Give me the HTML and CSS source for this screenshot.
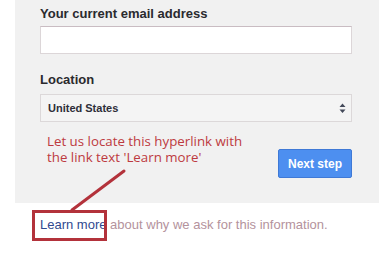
FILE: index.html
```html
<!DOCTYPE html>
<html>
<head>
<meta charset="utf-8">
<link rel="stylesheet" href="styles.css">
</head>
<body>
<div class="page">
  <div class="panel">
    <div class="label">Your current email address</div>
    <div class="input"></div>
    <div class="label label-loc">Location</div>
    <div class="select">
      <span class="select-text">United States</span>
      <svg class="arrows" width="7" height="11" viewBox="0 0 7 11"><path d="M3.5 0.5 L6.5 4 L0.5 4 Z M0.5 6.5 L6.5 6.5 L3.5 10 Z" fill="#444a5a"/></svg>
    </div>
    <div class="row">
      <div class="note">Let us locate this hyperlink with<br>the link text 'Learn more'</div>
      <div class="button">Next step</div>
    </div>
  </div>
  <div class="foot"><a class="link">Learn more</a> about why we ask for this information.</div>
  <svg class="overlay" width="379" height="254" viewBox="0 0 379 254">
    <line x1="124" y1="171" x2="72" y2="210" stroke="#b3323b" stroke-width="3" stroke-linecap="round"/>
    <rect x="33.5" y="211.5" width="72" height="28" fill="none" stroke="#b3323b" stroke-width="3"/>
  </svg>
</div>
</body>
</html>
```
FILE: styles.css
```css
html, body {
  margin: 0;
  padding: 0;
  background: #ffffff;
}
.page {
  position: relative;
  width: 379px;
  height: 254px;
  overflow: hidden;
  font-family: "Liberation Sans", Arial, sans-serif;
}
.panel {
  margin-left: 15px;
  background: #f1f1f1;
  padding: 6px 27px 25px 25px;
  height: 172px;
}
.label {
  font-size: 13px;
  font-weight: bold;
  line-height: 16px;
  color: #2a2a2e;
}
.input {
  margin-top: 4px;
  height: 26px;
  background: #ffffff;
  border: 1px solid #dcd6d8;
  border-top-color: #c9bcc2;
}
.label-loc {
  margin-top: 18px;
}
.select {
  margin-top: 6px;
  height: 26px;
  background: #f4f4f4;
  border: 1px solid #dcd8d9;
  display: flex;
  align-items: center;
  justify-content: space-between;
  padding: 0 5px 0 7px;
  box-sizing: content-box;
  width: 298px;
}
.select-text {
  font-size: 11px;
  font-weight: bold;
  color: #2e2e38;
}
.arrows {
  display: block;
}
.row {
  margin-top: 11px;
  display: flex;
  justify-content: space-between;
  align-items: flex-start;
  padding-left: 7px;
}
.note {
  font-family: "Open Sans", sans-serif;
  font-size: 13.3px;
  line-height: 16px;
  color: #bd3a40;
}
.button {
  margin-top: 16px;
  width: 72px;
  height: 27px;
  background: #4d8ff0;
  border: 1px solid #3f79d6;
  border-radius: 2px;
  color: #ffffff;
  font-size: 12px;
  font-weight: bold;
  display: flex;
  align-items: center;
  justify-content: center;
}
.foot {
  margin-top: 14px;
  padding-left: 40px;
  font-size: 13px;
  line-height: 16px;
  color: #b4929c;
}
.link {
  color: #30498f;
  text-decoration: none;
}
.overlay {
  position: absolute;
  left: 0;
  top: 0;
  pointer-events: none;
}
```
